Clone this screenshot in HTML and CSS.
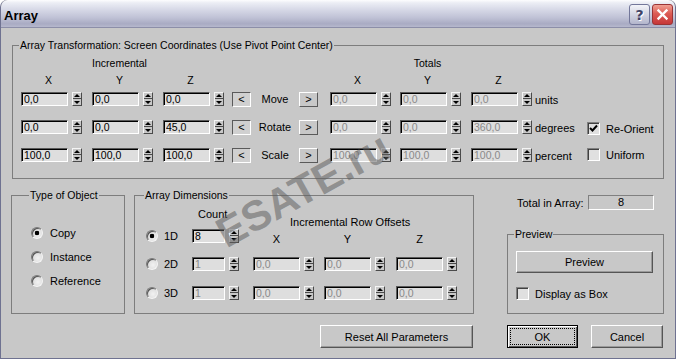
FILE: index.html
```html
<!DOCTYPE html>
<html lang="en">
<head>
    <meta charset="UTF-8">
    <title>Array</title>
    <link rel="stylesheet" href="styles.css">
</head>
<body>
    <div class="window">
        <div class="titlebar">
            <span class="title">Array</span>
            <span class="tbtn help">?</span>
            <span class="tbtn close">
                <svg width="13" height="13" viewBox="0 0 13 13"><path d="M2.5 2.5 L10.5 10.5 M10.5 2.5 L2.5 10.5" stroke="#fff" stroke-width="2.4" stroke-linecap="square"/></svg>
            </span>
        </div>

        <div class="content">
            <fieldset class="group transform">
                <legend>Array Transformation: Screen Coordinates (Use Pivot Point Center)</legend>

                <div class="trow head1">
                    <span class="head c2">Incremental</span>
                    <span class="head c8">Totals</span>
                </div>
                <div class="trow axes">
                    <span class="head c1">X</span>
                    <span class="head c2">Y</span>
                    <span class="head c3">Z</span>
                    <span class="head c7">X</span>
                    <span class="head c8">Y</span>
                    <span class="head c9">Z</span>
                </div>

                <div class="trow">
                    <div class="spinbox"><input class="field" value="0,0" readonly><span class="spin"></span></div>
                    <div class="spinbox"><input class="field" value="0,0" readonly><span class="spin"></span></div>
                    <div class="spinbox"><input class="field" value="0,0" readonly><span class="spin"></span></div>
                    <span class="tog down">&lt;</span>
                    <span class="rowlabel">Move</span>
                    <span class="tog up">&gt;</span>
                    <div class="spinbox"><input class="field off" value="0,0" readonly><span class="spin"></span></div>
                    <div class="spinbox"><input class="field off" value="0,0" readonly><span class="spin"></span></div>
                    <div class="spinbox"><input class="field off" value="0,0" readonly><span class="spin"></span></div>
                    <span class="unit">units</span>
                </div>
                <div class="trow">
                    <div class="spinbox"><input class="field" value="0,0" readonly><span class="spin"></span></div>
                    <div class="spinbox"><input class="field" value="0,0" readonly><span class="spin"></span></div>
                    <div class="spinbox"><input class="field" value="45,0" readonly><span class="spin"></span></div>
                    <span class="tog down">&lt;</span>
                    <span class="rowlabel">Rotate</span>
                    <span class="tog up">&gt;</span>
                    <div class="spinbox"><input class="field off" value="0,0" readonly><span class="spin"></span></div>
                    <div class="spinbox"><input class="field off" value="0,0" readonly><span class="spin"></span></div>
                    <div class="spinbox"><input class="field off" value="360,0" readonly><span class="spin"></span></div>
                    <span class="unit">degrees</span>
                    <label class="opt reorient">
                        <span class="check"><svg width="9" height="9" viewBox="0 0 9 9"><path d="M1 4 L3.5 6.5 L8 1.5" fill="none" stroke="#000" stroke-width="2"/></svg></span>
                        Re-Orient
                    </label>
                </div>
                <div class="trow">
                    <div class="spinbox"><input class="field" value="100,0" readonly><span class="spin"></span></div>
                    <div class="spinbox"><input class="field" value="100,0" readonly><span class="spin"></span></div>
                    <div class="spinbox"><input class="field" value="100,0" readonly><span class="spin"></span></div>
                    <span class="tog down">&lt;</span>
                    <span class="rowlabel">Scale</span>
                    <span class="tog up">&gt;</span>
                    <div class="spinbox"><input class="field off" value="100,0" readonly><span class="spin"></span></div>
                    <div class="spinbox"><input class="field off" value="100,0" readonly><span class="spin"></span></div>
                    <div class="spinbox"><input class="field off" value="100,0" readonly><span class="spin"></span></div>
                    <span class="unit">percent</span>
                    <label class="opt">
                        <span class="check"></span>
                        Uniform
                    </label>
                </div>
            </fieldset>

            <div class="lower">
                <fieldset class="group type">
                    <legend>Type of Object</legend>
                    <label class="radio-row"><span class="radio on"></span>Copy</label>
                    <label class="radio-row"><span class="radio"></span>Instance</label>
                    <label class="radio-row"><span class="radio"></span>Reference</label>
                </fieldset>

                <fieldset class="group dims">
                    <legend>Array Dimensions</legend>
                    <div class="drow dhead">
                        <span class="count-label">Count</span>
                        <span class="offsets-label">Incremental Row Offsets</span>
                    </div>
                    <div class="drow">
                        <label class="radio-dim"><span class="radio on"></span>1D</label>
                        <div class="spinbox"><input class="field count" value="8" readonly><span class="spin"></span></div>
                        <span class="axis">X</span>
                        <span class="axis">Y</span>
                        <span class="axis">Z</span>
                    </div>
                    <div class="drow">
                        <label class="radio-dim"><span class="radio"></span>2D</label>
                        <div class="spinbox"><input class="field count off" value="1" readonly><span class="spin"></span></div>
                        <div class="spinbox"><input class="field off" value="0,0" readonly><span class="spin"></span></div>
                        <div class="spinbox"><input class="field off" value="0,0" readonly><span class="spin"></span></div>
                        <div class="spinbox"><input class="field off" value="0,0" readonly><span class="spin"></span></div>
                    </div>
                    <div class="drow last">
                        <label class="radio-dim"><span class="radio"></span>3D</label>
                        <div class="spinbox"><input class="field count off" value="1" readonly><span class="spin"></span></div>
                        <div class="spinbox"><input class="field off" value="0,0" readonly><span class="spin"></span></div>
                        <div class="spinbox"><input class="field off" value="0,0" readonly><span class="spin"></span></div>
                        <div class="spinbox"><input class="field off" value="0,0" readonly><span class="spin"></span></div>
                    </div>
                </fieldset>

                <div class="side">
                    <div class="total">
                        <span>Total in Array:</span>
                        <span class="total-box">8</span>
                    </div>
                    <fieldset class="group preview">
                        <legend>Preview</legend>
                        <button class="btn preview-btn">Preview</button>
                        <label class="opt box-opt">
                            <span class="check"></span>
                            Display as Box
                        </label>
                    </fieldset>
                </div>

                <button class="btn reset">Reset All Parameters</button>
                <div class="actions">
                    <button class="btn default"><span>OK</span></button>
                    <button class="btn cancel">Cancel</button>
                </div>
            </div>
        </div>

        <div class="watermark">ESATE.ru</div>
    </div>
</body>
</html>
```

FILE: styles.css
```css
body {
    margin: 0;
    background: #fff;
    font-family: "Liberation Sans", Arial, sans-serif;
    font-size: 10.5px;
    color: #000;
}
.window {
    position: relative;
    width: 676px;
    height: 359px;
    box-sizing: border-box;
    background: #c8c8c8;
    border: 1px solid #6f7291;
    border-top: none;
    border-radius: 7px 7px 0 0;
    overflow: hidden;
}
.titlebar {
    height: 28px;
    box-sizing: border-box;
    display: flex;
    align-items: center;
    padding: 0 2px 0 3px;
    border-bottom: 1px solid #8c8ea8;
    border-radius: 7px 7px 0 0;
    background: linear-gradient(to bottom, #fdfdfe 0, #eceef5 10%, #d7d9e7 35%, #c0c2d6 65%, #a9abc3 88%, #b6b8cd 100%);
}
.title {
    flex: 1;
    padding-top: 4px;
    font-size: 13px;
    font-weight: bold;
}
.tbtn {
    width: 21px;
    height: 21px;
    box-sizing: border-box;
    margin: 2px 0 0 2px;
    border-radius: 3px;
    display: flex;
    align-items: center;
    justify-content: center;
}
.help {
    border: 1px solid #73779a;
    background: linear-gradient(#f4f5f9, #cfd1e0 55%, #b3b6cc);
    color: #3f4368;
    font: bold 14px "DejaVu Sans", sans-serif;
    text-shadow: 1px 1px 0 #fff;
}
.close {
    border: 1px solid #9a3436;
    background: linear-gradient(#f0a093, #dc5c55 45%, #c63739);
}
.content {
    padding-left: 10px;
}

/* group boxes */
.group {
    margin: 0;
    border: 1px solid #7d7d7d;
    min-width: 0;
    box-sizing: border-box;
}
.group legend {
    padding: 0 1px;
    margin-left: -2px;
    line-height: 12px;
}
.transform {
    width: 652px;
    margin: 11px 0 0 1px;
    padding: 6px 0 2px 8px;
}
.trow {
    display: grid;
    grid-template-columns: 71px 71px 69px 19px 48px 31px 70px 71px 61px 55px 1fr;
    height: 28px;
    align-items: start;
}
.trow.head1 {
    height: 17px;
}
.trow.axes {
    height: 18px;
}
.head {
    width: 55px;
    text-align: center;
    line-height: 12px;
}
.c1 { grid-column: 1; }
.c2 { grid-column: 2; }
.c3 { grid-column: 3; }
.c7 { grid-column: 7; }
.c8 { grid-column: 8; }
.c9 { grid-column: 9; }

/* spinner fields */
.spinbox {
    display: flex;
    gap: 4px;
}
.field {
    box-sizing: border-box;
    width: 47px;
    height: 14px;
    margin: 0;
    padding: 0 0 0 2px;
    border: 1px solid;
    border-color: #5a5a5a #fff #fff #5a5a5a;
    box-shadow: inset 1px 1px 0 #000;
    background: #dedede;
    font: inherit;
    color: #000;
    outline: none;
}
.field.off {
    color: #8a8a8a;
}
.field.count {
    width: 33px;
}
.spin {
    position: relative;
    flex: none;
    width: 10px;
    height: 14px;
    box-sizing: border-box;
    border: 1px solid;
    border-color: #f4f4f4 #4a4a4a #4a4a4a #f4f4f4;
    background: linear-gradient(#c8c8c8 5px, #4a4a4a 5px, #4a4a4a 6px, #c8c8c8 6px);
}
.spin::before,
.spin::after {
    content: "";
    position: absolute;
    left: 1px;
    border-left: 3px solid transparent;
    border-right: 3px solid transparent;
}
.spin::before {
    top: 1px;
    border-bottom: 3px solid #000;
}
.spin::after {
    bottom: 1px;
    border-top: 3px solid #000;
}

.tog {
    width: 19px;
    height: 15px;
    box-sizing: border-box;
    border: 1px solid;
    text-align: center;
    line-height: 12px;
    font-size: 11px;
}
.tog.down {
    border-color: #5a5a5a #fff #fff #5a5a5a;
    background: #d0d0d0;
}
.tog.up {
    border-color: #fff #5a5a5a #5a5a5a #fff;
}
.rowlabel {
    text-align: center;
    line-height: 14px;
    font-size: 11px;
}
.unit {
    padding: 1px 0 0 3px;
    line-height: 14px;
    font-size: 11px;
}

/* checkboxes and radios */
.opt {
    display: flex;
    align-items: center;
    gap: 6px;
    font-size: 11px;
}
.reorient {
    margin-top: 2px;
}
.check {
    width: 13px;
    height: 13px;
    box-sizing: border-box;
    border: 1px solid;
    border-color: #808080 #fff #fff #808080;
    box-shadow: inset 1px 1px 0 #404040;
    background: #e0e0e0;
    display: flex;
    align-items: center;
    justify-content: center;
}
.radio {
    width: 12px;
    height: 12px;
    box-sizing: border-box;
    border-radius: 50%;
    border: 1px solid;
    border-color: #7a7a7a #f4f4f4 #f4f4f4 #7a7a7a;
    box-shadow: inset 1px 1px 0 #555;
    background: radial-gradient(circle at 60% 60%, #f2f2f2, #d2d2d2);
}
.radio.on {
    background: radial-gradient(circle at 50% 50%, #000 0, #000 2px, transparent 2.6px), radial-gradient(circle at 60% 60%, #f2f2f2, #d2d2d2);
}

/* lower area */
.lower {
    display: grid;
    grid-template-columns: 123px 373px 157px;
    grid-template-rows: 125px 23px;
    row-gap: 11px;
    margin-top: 10px;
}
.type {
    width: 114px;
    padding: 20px 0 0 19px;
}
.radio-row {
    display: flex;
    align-items: center;
    gap: 7px;
    height: 24px;
    font-size: 11px;
}
.dims {
    width: 340px;
    padding: 0 0 0 11px;
}
.drow {
    display: grid;
    grid-template-columns: 46px 61px 71px 72px 1fr;
    height: 28px;
    align-items: start;
}
.drow.dhead {
    align-items: stretch;
}
.drow.last {
    height: 20px;
}
.drow:nth-child(4) {
    height: 29px;
}
.count-label {
    grid-column: 2;
    margin: 7px 0 0 6px;
    line-height: 12px;
    font-size: 11px;
}
.offsets-label {
    grid-column: 3 / span 3;
    align-self: end;
    margin: 0 0 1px 37px;
    line-height: 12px;
    font-size: 11px;
}
.radio-dim {
    display: flex;
    align-items: center;
    gap: 6px;
    height: 14px;
    font-size: 11px;
}
.axis {
    width: 47px;
    text-align: center;
    padding-top: 4px;
    line-height: 12px;
    font-size: 11px;
}

.side {
    display: flex;
    flex-direction: column;
}
.total {
    display: flex;
    align-items: center;
    margin: 6px 10px 0 10px;
    font-size: 11px;
}
.total-box {
    margin-left: auto;
    width: 66px;
    height: 15px;
    box-sizing: border-box;
    border: 1px solid;
    border-color: #808080 #fff #fff #808080;
    text-align: center;
    line-height: 13px;
}
.preview {
    flex: 1;
    margin-top: 18px;
    padding: 11px 0 0 8px;
}
.box-opt {
    margin-top: 14px;
}

/* buttons */
.btn {
    box-sizing: border-box;
    height: 23px;
    margin: 0;
    padding: 0;
    border: 1px solid;
    border-color: #fff #555 #555 #fff;
    box-shadow: inset -1px -1px 0 #9a9a9a;
    background: #c8c8c8;
    font-family: inherit;
    font-size: 11px;
    color: #000;
}
.preview-btn {
    display: block;
    width: 137px;
    height: 22px;
}
.reset {
    grid-column: 2;
    width: 153px;
    margin-left: 186px;
}
.actions {
    grid-column: 3;
    display: flex;
    justify-content: space-between;
    margin-right: 1px;
}
.default {
    width: 71px;
    display: flex;
    padding: 2px;
    border-color: #000;
    box-shadow: inset 1px 1px 0 #fff, inset -1px -1px 0 #555;
}
.default span {
    flex: 1;
    border: 1px dotted #000;
    display: flex;
    align-items: center;
    justify-content: center;
}
.cancel {
    width: 72px;
}

.watermark {
    position: absolute;
    left: 302px;
    top: 190px;
    transform: translate(-50%, -50%) rotate(-29deg);
    font-size: 42px;
    font-weight: bold;
    color: rgba(95, 95, 95, 0.55);
    white-space: nowrap;
    pointer-events: none;
}
```
